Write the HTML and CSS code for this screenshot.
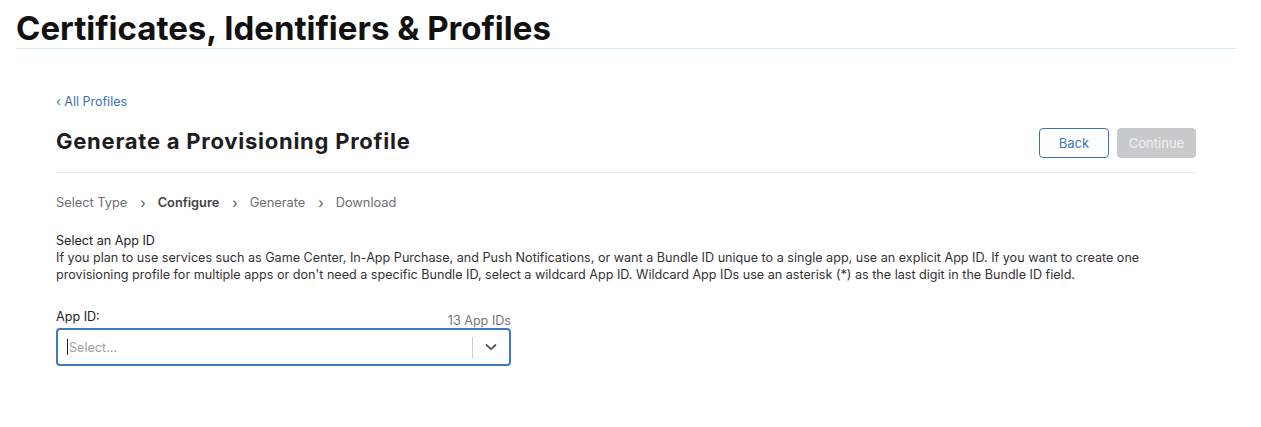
FILE: index.html
```html
<!DOCTYPE html>
<html>
<head>
<meta charset="utf-8">
<link rel="stylesheet" href="styles.css">
</head>
<body>
<header class="site-header">
  <h1 class="site-title">Certificates, Identifiers &amp; Profiles</h1>
</header>
<main class="content">
  <a class="back-link" href="#">‹ All Profiles</a>
  <div class="title-row">
    <h2 class="page-title">Generate a Provisioning Profile</h2>
    <div class="actions">
      <button class="btn btn-back">Back</button>
      <button class="btn btn-continue" disabled>Continue</button>
    </div>
  </div>
  <nav class="steps">
    <span class="step">Select Type</span>
    <span class="sep">›</span>
    <span class="step current">Configure</span>
    <span class="sep">›</span>
    <span class="step">Generate</span>
    <span class="sep">›</span>
    <span class="step">Download</span>
  </nav>
  <section class="intro">
    <div class="intro-title">Select an App ID</div>
    <p class="intro-text">If you plan to use services such as Game Center, In-App Purchase, and Push Notifications, or want a Bundle ID unique to a single app, use an explicit App ID. If you want to create one provisioning profile for multiple apps or don't need a specific Bundle ID, select a wildcard App ID. Wildcard App IDs use an asterisk (*) as the last digit in the Bundle ID field.</p>
  </section>
  <div class="field">
    <div class="field-head">
      <label class="field-label">App ID:</label>
      <span class="field-count">13 App IDs</span>
    </div>
    <div class="select">
      <div class="select-value"><span class="caret"></span>Select...</div>
      <div class="select-divider"></div>
      <div class="select-arrow">
        <svg width="14" height="14" viewBox="0 0 14 14"><path d="M2.5 5 L7 9.2 L11.5 5" fill="none" stroke="#555" stroke-width="1.8" stroke-linecap="round" stroke-linejoin="round"/></svg>
      </div>
    </div>
  </div>
</main>
</body>
</html>
```

FILE: styles.css
```css
* { box-sizing: border-box; }
html, body { margin: 0; padding: 0; background: #fff; }
body {
  font-family: Inter, "Noto Sans", "Liberation Sans", sans-serif;
  color: #333;
  -webkit-font-smoothing: antialiased;
}
.site-header {
  margin: 0 25px 0 16px;
  border-bottom: 1px solid #d9ecec;
  padding-top: 9px;
  height: 49px;
}
.site-title {
  margin: 0;
  font-size: 33px;
  line-height: 39px;
  font-weight: 700;
  color: #111;
  letter-spacing: 0;
}
.content {
  width: 1140px;
  margin-left: 56px;
  padding-top: 45px;
}
.back-link {
  display: block;
  font-size: 12.5px;
  line-height: 15px;
  color: #3a72b8;
  text-decoration: none;
}
.title-row {
  display: flex;
  align-items: flex-start;
  justify-content: space-between;
  border-bottom: 1px solid #e0eeee;
  height: 64px;
  padding-top: 18px;
}
.page-title {
  margin: 0;
  font-size: 22px;
  line-height: 28px;
  font-weight: 700;
  color: #1d1d1f;
  letter-spacing: 0.75px;
}
.actions {
  display: flex;
  gap: 8px;
  padding-top: 1px;
}
.btn {
  height: 30px;
  font-family: inherit;
  font-size: 13px;
  border-radius: 4px;
  padding: 0;
}
.btn-back {
  width: 70px;
  background: #fff;
  border: 1px solid #3a72b8;
  color: #3a72b8;
}
.btn-continue {
  width: 79px;
  background: #c8c9ca;
  border: 1px solid #c8c9ca;
  color: #f2f2f2;
}
.steps {
  display: flex;
  align-items: center;
  padding-top: 22px;
  font-size: 12.8px;
  line-height: 16px;
  color: #6e6e73;
}
.sep {
  color: #555;
  margin: 0 12px 0 13px;
  font-size: 14px;
}
.step.current { font-weight: 600; color: #444; }
.intro {
  padding-top: 21px;
  font-size: 12.6px;
  line-height: 17px;
  color: #333;
}
.intro-title { color: #222; }
.intro-text { margin: 0; }
.field {
  width: 455px;
  margin-top: 26px;
}
.field-head {
  display: flex;
  justify-content: space-between;
  align-items: flex-end;
  font-size: 12.6px;
  line-height: 16px;
}
.field-label { color: #222; }
.field-count { color: #777; position: relative; top: 4px; }
.select {
  margin-top: 3px;
  height: 38px;
  border: 2px solid #3f78c0;
  border-radius: 4px;
  display: flex;
  align-items: center;
}
.select-value {
  flex: 1;
  display: flex;
  align-items: center;
  padding-left: 9px;
  font-size: 12.6px;
  color: #a0a0a0;
}
.caret {
  display: inline-block;
  width: 1px;
  height: 16px;
  background: #222;
  margin-right: 1px;
}
.select-divider {
  width: 1px;
  height: 21px;
  background: #ccc;
}
.select-arrow {
  width: 36px;
  display: flex;
  justify-content: center;
  align-items: center;
}
```
